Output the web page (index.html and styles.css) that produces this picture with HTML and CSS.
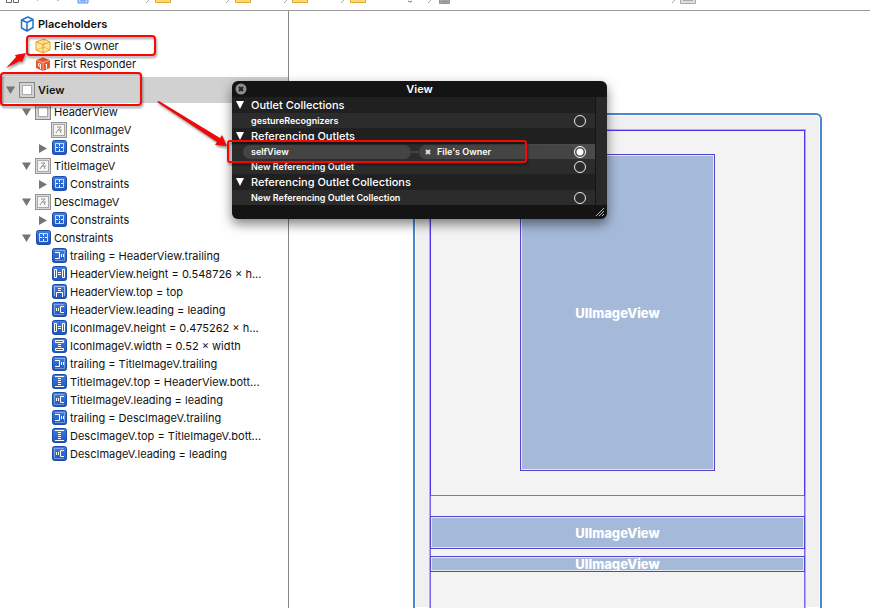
FILE: index.html
```
<!DOCTYPE html>
<html lang="en">
<head>
<meta charset="utf-8">
<title>Interface Builder</title>
<link rel="stylesheet" href="styles.css">
</head>
<body>
<svg class="sprite" aria-hidden="true">
  <defs>
    <linearGradient id="blue" x1="0" y1="0" x2="0" y2="1"><stop offset="0" stop-color="#3f7fe0"/><stop offset="1" stop-color="#1c55bf"/></linearGradient>
  </defs>
  <symbol id="open" viewBox="0 0 16 16"><path d="M3 4.500h9L7.500 12z" fill="#757575"/></symbol>
  <symbol id="closed" viewBox="0 0 16 16"><path d="M4 4l8 4.500L4 13z" fill="#757575"/></symbol>
  <symbol id="tile" viewBox="0 0 16 16"><rect x="1.500" y=".5" width="14" height="14" rx="2" fill="url(#blue)" stroke="#1a4dab"/></symbol>
  <symbol id="cube" viewBox="0 0 16 16"><path d="M2.500 4L9 1l5 2.500v8L8 15l-5.500-3zM2.500 4L8 6.500l6-3M8 6.500V15" fill="#fff" stroke="#1c73d2" stroke-width="1.500" stroke-linejoin="round"/></symbol>
  <symbol id="owner" viewBox="0 0 16 16"><path d="M1 4l8-3 6 3v8l-7 3-7-3z" fill="#ffe6a0" stroke="#e3a51c" stroke-linejoin="round"/><path d="M1 4l7 2.500L15 4M8 6.500V15" fill="none" stroke="#e3a51c"/><path d="M9 1v8M1 12l8-3 6 3" fill="none" stroke="#e3a51c" stroke-opacity=".6"/></symbol>
  <symbol id="responder" viewBox="0 0 16 16"><path d="M1 4l7-2.500L15 4v8l-7 3-7-3z" fill="#e5562f"/><path d="M1.500 4.500L8 6.500l6.500-2M8 6.500V15" fill="none" stroke="#fff" stroke-opacity=".5"/><path d="M3.500 7.500v2.500l2 .5V8zM5.500 10v3M10.500 9l1-1v5" fill="none" stroke="#fff" stroke-opacity=".9"/></symbol>
  <symbol id="view" viewBox="0 0 16 16"><rect x=".5" y=".5" width="15" height="15" fill="#d2d2d2" stroke="#868686"/><rect x="3.500" y="3.500" width="9" height="9" fill="#fff" stroke="#aaa"/></symbol>
  <symbol id="image" viewBox="0 0 16 16"><rect x=".5" y=".5" width="15" height="15" fill="#d8d8d8" stroke="#969696"/><rect x="2.500" y="2.500" width="11" height="11" fill="#f5f5f5" stroke="#aaa"/><path d="M6 5h4M10 5L7 8h4M7 8l-2 3M9 8l1 3" fill="none" stroke="#929292"/></symbol>
  <symbol id="constraints" viewBox="0 0 16 16"><use href="#tile"/><path d="M4.500 3.500h8v8h-8z" fill="none" stroke="#fff" stroke-opacity=".75"/><path d="M8.500 4v2M8.500 7v1M8.500 9v2M5 7.500h2M10 7.500h2" fill="none" stroke="#fff"/></symbol>
  <symbol id="trailing" viewBox="0 0 16 16"><use href="#tile"/><path d="M4 2.500h9.500v10H4" fill="none" stroke="#fff" stroke-opacity=".35"/><path d="M4 4.500h4.500v6H4M10.500 6v3M12.500 6v3" fill="none" stroke="#fff"/></symbol>
  <symbol id="leading" viewBox="0 0 16 16"><use href="#tile"/><path d="M13 2.500H3.500v10H13" fill="none" stroke="#fff" stroke-opacity=".35"/><path d="M13 4.500H9.500v6H13M5.500 6v3M7.500 6v3" fill="none" stroke="#fff"/></symbol>
  <symbol id="height" viewBox="0 0 16 16"><use href="#tile"/><path d="M3.500 3.500h2v8h-2zM11.500 3.500h2v8h-2zM7 6.500h3M7 8.500h3" fill="none" stroke="#fff"/></symbol>
  <symbol id="top" viewBox="0 0 16 16"><use href="#tile"/><path d="M3.500 12V2.500h10V12" fill="none" stroke="#fff" stroke-opacity=".5"/><path d="M7 4.500h3M7 6.500h3M5.500 13V8.500h6V13" fill="none" stroke="#fff"/></symbol>
  <symbol id="width" viewBox="0 0 16 16"><use href="#tile"/><path d="M4.500 2.500h8v2h-8zM4.500 10.500h8v2h-8zM7 6.500h3M7 8.500h3" fill="none" stroke="#fff"/></symbol>
  <symbol id="vertical" viewBox="0 0 16 16"><use href="#tile"/><path d="M4 2.500h9M4 12.500h9M7 4.500h3M7 6.500h3M7 8.500h3M7 10.500h3" fill="none" stroke="#fff"/></symbol>
</svg>

<div class="window">
  <header class="jumpbar">
    <svg viewBox="0 0 870 10" preserveAspectRatio="xMinYMin slice" aria-hidden="true">
      <path d="M6.500 0v2.500h5V0M13.500 0v2.500h5V0" fill="none" stroke="#666"/>
      <path d="M37 0l1 1M59 0l-2 1M149 0l-3 3M229 0l-3 3M287 0l-3 3M344 0l-3 3M431 0l-3 3M675 0l-3 3" stroke="#aaa"/>
      <path d="M78 0v3h10V0M81 0v1h4V0" fill="#b9d7ff" stroke="#5c91ee"/>
      <path d="M155.500 0v2.500h15V0M235.500 0v2.500h15V0M292.500 0v2.500h15V0M350.500 0v2.500h15V0" fill="#ffdc70" stroke="#dda930"/>
      <path d="M408 1q2 2 4 0" fill="none" stroke="#777"/>
      <path d="M439.500 0v3.500h10V0" fill="#a8a9ac" stroke="#8f9298"/>
      <path d="M441 1.500h7" stroke="#b08a3c"/>
      <path d="M680.500 0v3.500h15V0M683 .5h10" fill="#ddd" stroke="#aaa"/>
    </svg>
  </header>

  <main class="editor">
    <nav class="outline" aria-label="Document outline">
      <ul class="tree">
        <li class="row section"><i class="arrow"></i><svg class="icon"><use href="#cube"/></svg><span>Placeholders</span></li>
        <li class="row level1"><i class="arrow"></i><svg class="icon"><use href="#owner"/></svg><span>File's Owner</span></li>
        <li class="row level1"><i class="arrow"></i><svg class="icon"><use href="#responder"/></svg><span>First Responder</span></li>
      </ul>
      <ul class="tree">
        <li class="row section selected"><button class="arrow" aria-label="Collapse View"><svg><use href="#open"/></svg></button><svg class="icon"><use href="#view"/></svg><span>View</span></li>
        <li class="row level1"><button class="arrow" aria-label="Collapse HeaderView"><svg><use href="#open"/></svg></button><svg class="icon"><use href="#view"/></svg><span>HeaderView</span></li>
        <li class="row level2"><i class="arrow"></i><svg class="icon"><use href="#image"/></svg><span>IconImageV</span></li>
        <li class="row level2"><button class="arrow" aria-label="Expand"><svg><use href="#closed"/></svg></button><svg class="icon"><use href="#constraints"/></svg><span>Constraints</span></li>
        <li class="row level1"><button class="arrow" aria-label="Collapse TitleImageV"><svg><use href="#open"/></svg></button><svg class="icon"><use href="#image"/></svg><span>TitleImageV</span></li>
        <li class="row level2"><button class="arrow" aria-label="Expand"><svg><use href="#closed"/></svg></button><svg class="icon"><use href="#constraints"/></svg><span>Constraints</span></li>
        <li class="row level1"><button class="arrow" aria-label="Collapse DescImageV"><svg><use href="#open"/></svg></button><svg class="icon"><use href="#image"/></svg><span>DescImageV</span></li>
        <li class="row level2"><button class="arrow" aria-label="Expand"><svg><use href="#closed"/></svg></button><svg class="icon"><use href="#constraints"/></svg><span>Constraints</span></li>
        <li class="row level1"><button class="arrow" aria-label="Collapse Constraints"><svg><use href="#open"/></svg></button><svg class="icon"><use href="#constraints"/></svg><span>Constraints</span></li>
        <li class="row level2"><i class="arrow"></i><svg class="icon"><use href="#trailing"/></svg><span>trailing = HeaderView.trailing</span></li>
        <li class="row level2"><i class="arrow"></i><svg class="icon"><use href="#height"/></svg><span>HeaderView.height = 0.548726 × h...</span></li>
        <li class="row level2"><i class="arrow"></i><svg class="icon"><use href="#top"/></svg><span>HeaderView.top = top</span></li>
        <li class="row level2"><i class="arrow"></i><svg class="icon"><use href="#leading"/></svg><span>HeaderView.leading = leading</span></li>
        <li class="row level2"><i class="arrow"></i><svg class="icon"><use href="#height"/></svg><span>IconImageV.height = 0.475262 × h...</span></li>
        <li class="row level2"><i class="arrow"></i><svg class="icon"><use href="#width"/></svg><span>IconImageV.width = 0.52 × width</span></li>
        <li class="row level2"><i class="arrow"></i><svg class="icon"><use href="#trailing"/></svg><span>trailing = TitleImageV.trailing</span></li>
        <li class="row level2"><i class="arrow"></i><svg class="icon"><use href="#vertical"/></svg><span>TitleImageV.top = HeaderView.bott...</span></li>
        <li class="row level2"><i class="arrow"></i><svg class="icon"><use href="#leading"/></svg><span>TitleImageV.leading = leading</span></li>
        <li class="row level2"><i class="arrow"></i><svg class="icon"><use href="#trailing"/></svg><span>trailing = DescImageV.trailing</span></li>
        <li class="row level2"><i class="arrow"></i><svg class="icon"><use href="#vertical"/></svg><span>DescImageV.top = TitleImageV.bott...</span></li>
        <li class="row level2"><i class="arrow"></i><svg class="icon"><use href="#leading"/></svg><span>DescImageV.leading = leading</span></li>
      </ul>
    </nav>

    <section class="canvas" aria-label="Canvas">
      <div class="scene">
        <div class="root-view">
          <div class="header-view"><div class="image-view tall">UIImageView</div></div>
          <div class="image-view title-image">UIImageView</div>
          <div class="image-view desc-image">UIImageView</div>
        </div>
      </div>
    </section>
  </main>

  <aside class="hud" aria-label="Connections">
    <header class="hud-title">
      <button class="close" aria-label="Close"><svg viewBox="0 0 12 12"><circle cx="6" cy="6" r="5.500" fill="#8d8d8d"/><path d="M4 4l4 4M8 4L4 8" stroke="#222" stroke-width="2"/></svg></button>
      <h1>View</h1>
    </header>
    <div class="hud-body">
      <div class="hud-list">
        <h2><svg viewBox="0 0 10 10"><path d="M1 1h8L5 9z" fill="#fff"/></svg>Outlet Collections</h2>
        <label class="outlet"><span>gestureRecognizers</span><input type="radio" name="gesture"></label>
        <h2><svg viewBox="0 0 10 10"><path d="M1 1h8L5 9z" fill="#fff"/></svg>Referencing Outlets</h2>
        <label class="outlet connected"><span class="pill">selfView</span><span class="wire"></span><span class="target"><svg viewBox="0 0 6 6"><path d="M1 1l4 4M5 1L1 5" stroke="#ddd" stroke-width="2"/></svg>File's Owner</span><input type="radio" name="self" checked></label>
        <label class="outlet"><span>New Referencing Outlet</span><input type="radio" name="new-outlet"></label>
        <h2><svg viewBox="0 0 10 10"><path d="M1 1h8L5 9z" fill="#fff"/></svg>Referencing Outlet Collections</h2>
        <label class="outlet"><span>New Referencing Outlet Collection</span><input type="radio" name="new-collection"></label>
      </div>
      <div class="scroller"></div>
    </div>
    <footer class="hud-foot"><svg viewBox="0 0 10 10"><path d="M1 9l8-8M4 9l5-5M7 9l2-2" stroke="#bbb"/></svg></footer>
  </aside>

  <svg class="marks" viewBox="0 0 870 608" aria-hidden="true">
    <g fill="none" stroke="#fb0505" stroke-width="2">
      <rect x="27" y="36" width="128" height="19" rx="3"/>
      <rect x="1" y="73" width="140" height="32" rx="3"/>
      <rect x="228" y="141" width="298" height="21" rx="2"/>
    </g>
    <path d="M6 68l10-11-1-2 11-2-4 9-2-1zM157 102l2-1 61 37 2-3 5 11-12-1 2-3z" fill="#f00909"/>
  </svg>
</div>
</body>
</html>
```
FILE: styles.css
```
* { box-sizing: border-box; }
body { margin: 0; background: #fff; color: #111; font: 11px/18px Inter, "Liberation Sans", sans-serif; }
h1, h2, ul { margin: 0; padding: 0; }
button { padding: 0; border: 0; background: none; }
svg { display: block; }
.sprite { position: absolute; width: 0; height: 0; }
.window { position: relative; display: flex; flex-direction: column; height: 100vh; overflow: hidden; }
.jumpbar { flex: none; height: 11px; overflow: hidden; border-bottom: 1px solid #9b9b9b; }
.jumpbar svg { width: 870px; height: 10px; }
.editor { display: flex; flex: 1; min-height: 0; }

.outline { flex: none; width: 289px; border-right: 1px solid #868686; }
.tree { list-style: none; margin-bottom: 4px; }
.row { display: flex; align-items: center; height: 18px; padding-left: 3px; white-space: nowrap; }
.row.level1 { padding-left: 19px; }
.row.level2 { padding-left: 35px; }
.row.section { height: 26px; font-weight: 600; }
.row.selected { background: #d1d1d1; }
.arrow, .arrow svg, .icon { flex: none; width: 16px; height: 16px; }
.icon { margin-right: 3px; }

.canvas { flex: 1; min-width: 0; display: flex; padding: 102px 48px 0 124px; }
.scene { flex: 1; padding: 15px 15px 0; border: 2px solid #4a88d0; border-bottom: 0; border-radius: 6px 6px 0 0; background: #f0f0f0; box-shadow: inset 0 0 0 1px #fff; }
.root-view { height: 100%; border: 1px solid #7d66f0; border-top-color: #432cf0; border-bottom: 0; background: #f3f3f3; box-shadow: 0 0 0 1px #b3b3b3; }
.header-view { display: flex; justify-content: center; height: 366px; margin: -1px -1px 20px; padding-top: 24px; border: 1px solid #4c35ef; border-bottom-color: #7d66f0; }
.image-view { display: flex; align-items: center; justify-content: center; overflow: hidden; border: 1px solid #5642d0; background: #a5b9d9; box-shadow: inset 0 0 0 1px #e3e8f2; color: #fff; font-size: 13px; font-weight: 800; line-height: 14px; }
.tall { width: calc(52% + 1px); height: 317px; margin-top: -1px; }
.title-image { height: 33px; margin: 0 -1px 7px; }
.desc-image { height: 16px; margin: 0 -1px; }

.hud { position: absolute; top: 81px; left: 232px; width: 375px; overflow: hidden; border-radius: 6px; background: #141414; box-shadow: 0 5px 12px rgba(0, 0, 0, .5); color: #fff; }
.hud-title { display: flex; align-items: center; height: 16px; padding: 0 3px; }
.hud-title h1 { flex: 1; margin-right: 12px; text-align: center; font-size: 11px; font-weight: 600; line-height: 16px; }
.close, .close svg { width: 12px; height: 12px; }
.hud-body { display: flex; background: #202020; }
.hud-list { flex: 1; }
.hud h2 { display: flex; align-items: center; gap: 6px; height: 16px; padding-left: 3px; font-size: 11px; font-weight: 500; line-height: 16px; }
.hud h2 svg { width: 10px; height: 10px; }
.outlet { display: flex; align-items: center; height: 15px; padding: 0 9px 0 19px; background: #2c2c2c; font-size: 9px; font-weight: 600; line-height: 14px; }
.outlet input { appearance: none; flex: none; width: 12px; height: 12px; margin: 0 0 0 auto; border: 1px solid #eee; border-radius: 50%; }
.outlet input:checked { border-color: #fff; background: radial-gradient(circle, #fff 3px, transparent 4px); }
.connected { padding-left: 11px; background: linear-gradient(90deg, #2c2c2c 50%, #4a4a4a 85%); }
.pill { width: 168px; height: 14px; padding-left: 8px; border-radius: 7px; background: #444; }
.wire { width: 8px; height: 2px; background: #444; }
.target { display: flex; flex: 1; align-items: center; gap: 6px; height: 14px; padding-left: 6px; border-radius: 7px; background: #444; }
.target svg { width: 6px; height: 6px; }
.scroller { width: 12px; border-left: 1px solid #151515; background: #292929; }
.hud-foot { display: flex; align-items: center; justify-content: flex-end; height: 14px; padding-right: 2px; }
.hud-foot svg { width: 10px; height: 10px; }
.marks { position: absolute; top: 0; left: 0; width: 870px; height: 608px; pointer-events: none; filter: drop-shadow(1px 2px 1px rgba(0, 0, 0, .4)); }
```
